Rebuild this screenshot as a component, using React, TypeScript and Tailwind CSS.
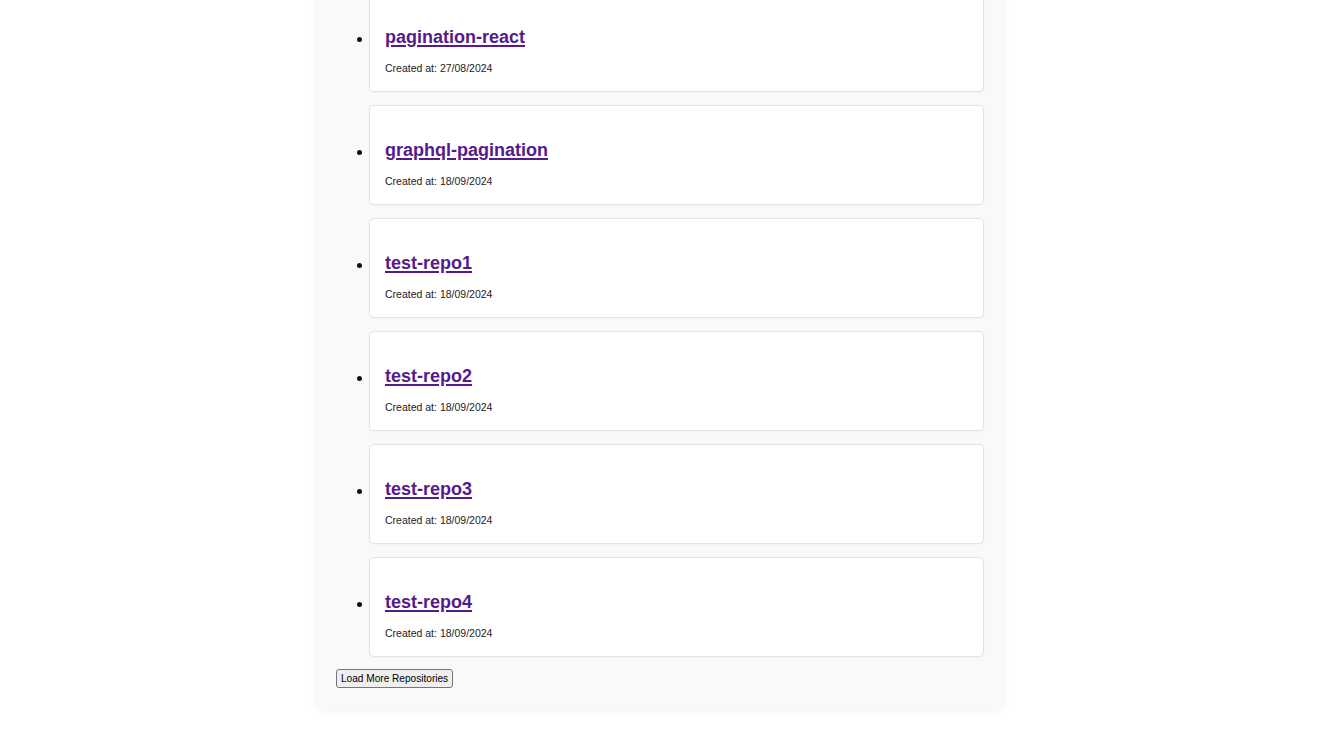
import React from "react";

const repos = [
  { name: "pagination-react", date: "27/08/2024" },
  { name: "graphql-pagination", date: "18/09/2024" },
  { name: "test-repo1", date: "18/09/2024" },
  { name: "test-repo2", date: "18/09/2024" },
  { name: "test-repo3", date: "18/09/2024" },
  { name: "test-repo4", date: "18/09/2024" },
];

export default function App() {
  return (
    <div
      className="h-[742px] overflow-hidden bg-white flex flex-col justify-end pb-[33px]"
      style={{ fontFamily: '"Liberation Sans", Arial, sans-serif' }}
    >
      <div className="mx-auto w-[686px] bg-[#f9f9f9] rounded-[8px] shadow-[0_0_10px_rgba(0,0,0,0.08)] px-[19px] pb-[20px]">
        <ul className="flex flex-col gap-[13px] text-[#222]">
          {repos.map((r) => (
            <li key={r.name} className="flex items-start">
              <span className="w-[33px] shrink-0 flex">
                <span className="ml-[21px] mt-[45px] w-[5px] h-[5px] rounded-full bg-[#111]" />
              </span>
              <div className="flex-1 bg-white border border-[#e3e3e3] rounded-[5px] h-[100px] pt-[33px] px-[15px] shadow-[0_1px_2px_rgba(0,0,0,0.03)]">
                <a
                  href="#"
                  className="block w-fit text-[18px] leading-[22px] font-bold text-[#551a8b] underline decoration-[1.5px] underline-offset-[2px]"
                >
                  {r.name}
                </a>
                <p className="mt-[14px] text-[10.5px] leading-[13px] text-[#222]">
                  Created at: {r.date}
                </p>
              </div>
            </li>
          ))}
        </ul>
        <button className="mt-[12px] h-[19px] px-[4px] text-[10.1px] leading-[13px] text-black bg-[#efefef] border border-[#767676] rounded-[3px]">
          Load More Repositories
        </button>
      </div>
    </div>
  );
}
